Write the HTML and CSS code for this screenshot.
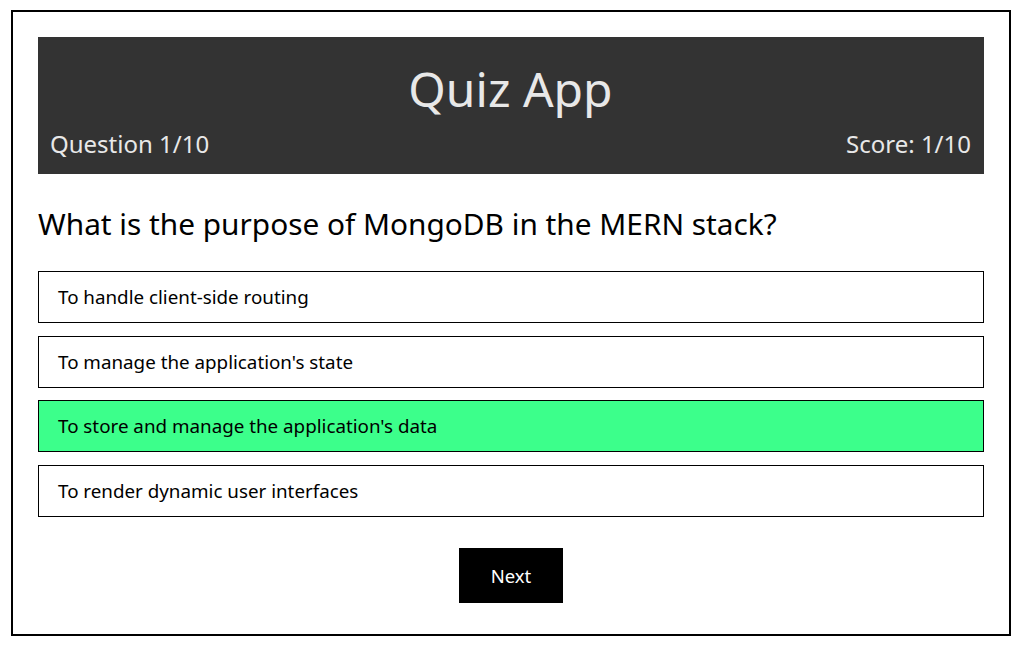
FILE: index.html
```html
<!DOCTYPE html>
<html lang="en">
<head>
<meta charset="utf-8">
<title>Quiz App</title>
<link rel="stylesheet" href="styles.css">
</head>
<body>
<div class="app">
  <header class="header">
    <h1 class="title">Quiz App</h1>
    <div class="meta">
      <span>Question 1/10</span>
      <span>Score: 1/10</span>
    </div>
  </header>
  <h2 class="question">What is the purpose of MongoDB in the MERN stack?</h2>
  <ul class="options">
    <li class="option">To handle client-side routing</li>
    <li class="option">To manage the application's state</li>
    <li class="option option-correct">To store and manage the application's data</li>
    <li class="option">To render dynamic user interfaces</li>
  </ul>
  <div class="actions">
    <button class="next">Next</button>
  </div>
</div>
</body>
</html>
```

FILE: styles.css
```css
* { box-sizing: border-box; }
html, body { margin: 0; padding: 0; background: #fff; }
body {
  font-family: "Noto Sans", "Open Sans", sans-serif;
  color: #000;
}
.app {
  width: 1000px;
  height: 626px;
  margin: 10px 0 0 11px;
  border: 2px solid #000;
  padding: 25px;
  display: flex;
  flex-direction: column;
}
.header {
  background: #333;
  color: #e8e8e8;
  height: 137px;
  padding: 0 13px 0 12px;
  display: flex;
  flex-direction: column;
}
.title {
  margin: 0;
  font-weight: 400;
  font-size: 48px;
  line-height: 1;
  text-align: center;
  padding-top: 28px;
}
.meta {
  margin-top: 16px;
  display: flex;
  justify-content: space-between;
  font-size: 24px;
  line-height: 30px;
}
.question {
  margin: 32px 0 0;
  font-weight: 400;
  font-size: 29.8px;
  line-height: 36px;
}
.options {
  list-style: none;
  margin: 29px 0 0;
  padding: 0;
  display: flex;
  flex-direction: column;
  gap: 12.66px;
}
.option {
  height: 52px;
  border: 1px solid #000;
  padding: 0 19px;
  display: flex;
  align-items: center;
  font-size: 18.8px;
}
.option-correct { background: #3cff8b; }
.actions {
  margin-top: 31px;
  display: flex;
  justify-content: center;
}
.next {
  width: 104px;
  height: 55px;
  background: #000;
  color: #fff;
  border: none;
  font-family: inherit;
  font-size: 18.5px;
}
```
